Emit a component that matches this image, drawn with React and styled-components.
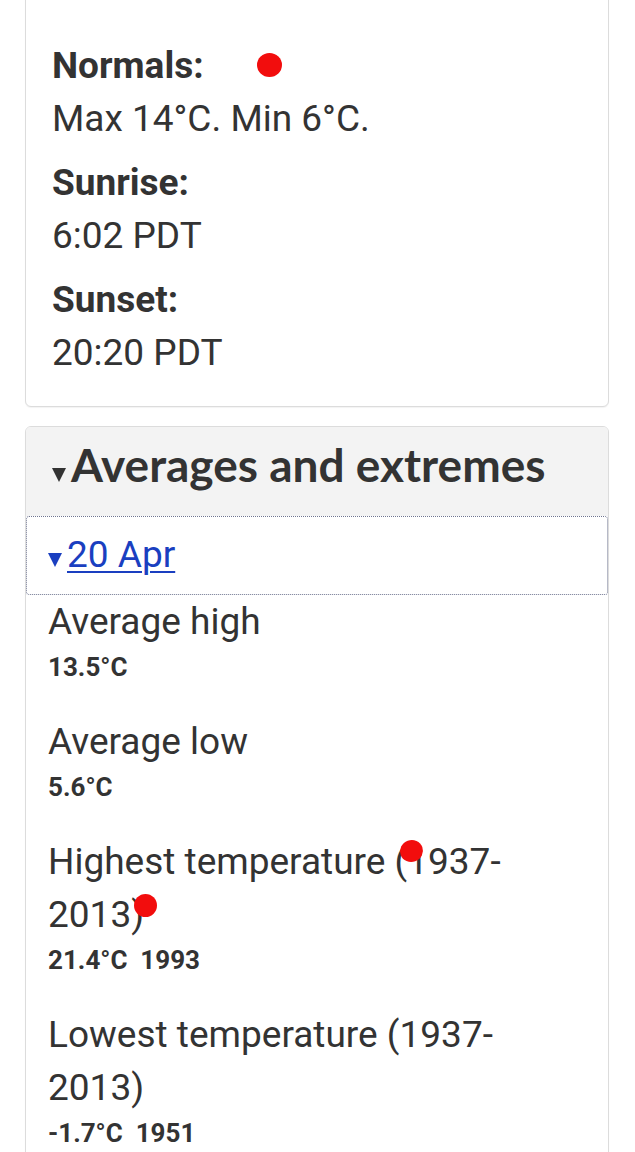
import React from "react";
import styled, { createGlobalStyle } from "styled-components";

const Global = createGlobalStyle`
  html, body { margin: 0; padding: 0; background: #fff; }
  body { font-family: Roboto, "Liberation Sans", Arial, sans-serif; color: #333; overflow: hidden; }
`;

const Page = styled.div`
  position: relative;
  padding: 0 26px 0 25px;
  height: 1152px;
  overflow: hidden;
`;

const Card = styled.section`
  border: 1px solid #dcdcdc;
  border-radius: 6px;
  background: #fff;
  box-shadow: 0 1px 1px rgba(0, 0, 0, 0.05);
  margin-top: ${(p) => p.$mt || "0"};
  overflow: hidden;
`;

const InfoBody = styled.dl`
  margin: 0;
  padding: 58px 26px 27px 26px;
`;

const Label = styled.dt`
  font-size: 37px;
  font-weight: 700;
  line-height: 53px;
  margin-top: ${(p) => (p.$first ? "0" : "11px")};
`;

const Value = styled.dd`
  margin: 0;
  font-size: 37px;
  line-height: 53px;
`;

const Header = styled.div`
  background: #f3f3f3;
  padding: 12px 20px 24px 26px;
  display: flex;
  align-items: baseline;
`;

const Heading = styled.h2`
  margin: 0;
  font-family: Lato, "Liberation Sans", sans-serif;
  font-weight: 700;
  font-size: 46px;
  line-height: 1.15;
  color: #333;
  display: flex;
  align-items: baseline;
`;

const Triangle = styled.span`
  display: inline-block;
  width: 0;
  height: 0;
  border-left: ${(p) => p.$size / 2}px solid transparent;
  border-right: ${(p) => p.$size / 2}px solid transparent;
  border-top: ${(p) => p.$size - 1}px solid ${(p) => p.$color};
  margin-right: ${(p) => p.$gap}px;
`;

const Summary = styled.div`
  border: 1px dotted #6f7590;
  border-radius: 3px;
  padding: 11px 20px 13px 21px;
  display: flex;
  align-items: baseline;
  font-size: 37px;
  line-height: 53px;
`;

const DateLink = styled.a`
  color: #1a3fc0;
  text-decoration: underline;
  text-decoration-thickness: 2px;
  text-underline-offset: 4px;
`;

const List = styled.div`
  padding: 0 44px 120px 22px;
  display: flex;
  flex-direction: column;
  gap: 33px;
`;

const Item = styled.div`
  display: flex;
  flex-direction: column;
`;

const ItemTitle = styled.div`
  font-size: 37px;
  line-height: 53px;
`;

const ItemValue = styled.div`
  margin-top: 4px;
  font-size: 26px;
  font-weight: 700;
  line-height: 30px;
  white-space: pre;
`;

const Dot = styled.span`
  position: absolute;
  left: ${(p) => p.$x}px;
  top: ${(p) => p.$y}px;
  width: ${(p) => p.$w}px;
  height: ${(p) => p.$h}px;
  border-radius: 50%;
  background: #f20d0d;
  transform: rotate(${(p) => p.$r || 0}deg);
`;

const items = [
  { title: "Average high", value: "13.5°C" },
  { title: "Average low", value: "5.6°C" },
  { title: "Highest temperature (1937-2013)", value: "21.4°C  1993" },
  { title: "Lowest temperature (1937-2013)", value: "-1.7°C  1951" },
];

export default function App() {
  return (
    <>
      <Global />
      <Page>
        <Card $mt="-20px">
          <InfoBody>
            <Label $first>Normals:</Label>
            <Value>Max 14°C. Min 6°C.</Value>
            <Label>Sunrise:</Label>
            <Value>6:02 PDT</Value>
            <Label>Sunset:</Label>
            <Value>20:20 PDT</Value>
          </InfoBody>
        </Card>
        <Card $mt="19px">
          <Header>
            <Heading>
              <Triangle $size={15} $color="#333" $gap={5} />
              Averages and extremes
            </Heading>
          </Header>
          <Summary>
            <Triangle $size={15} $color="#1a3fc0" $gap={5} />
            <DateLink href="#">20 Apr</DateLink>
          </Summary>
          <List>
            {items.map((it) => (
              <Item key={it.title}>
                <ItemTitle>{it.title}</ItemTitle>
                <ItemValue>{it.value}</ItemValue>
              </Item>
            ))}
          </List>
        </Card>
        <Dot $x={257} $y={53} $w={25} $h={24} />
        <Dot $x={400} $y={840} $w={23} $h={22} $r={-20} />
        <Dot $x={134} $y={894} $w={23} $h={23} />
      </Page>
    </>
  );
}
